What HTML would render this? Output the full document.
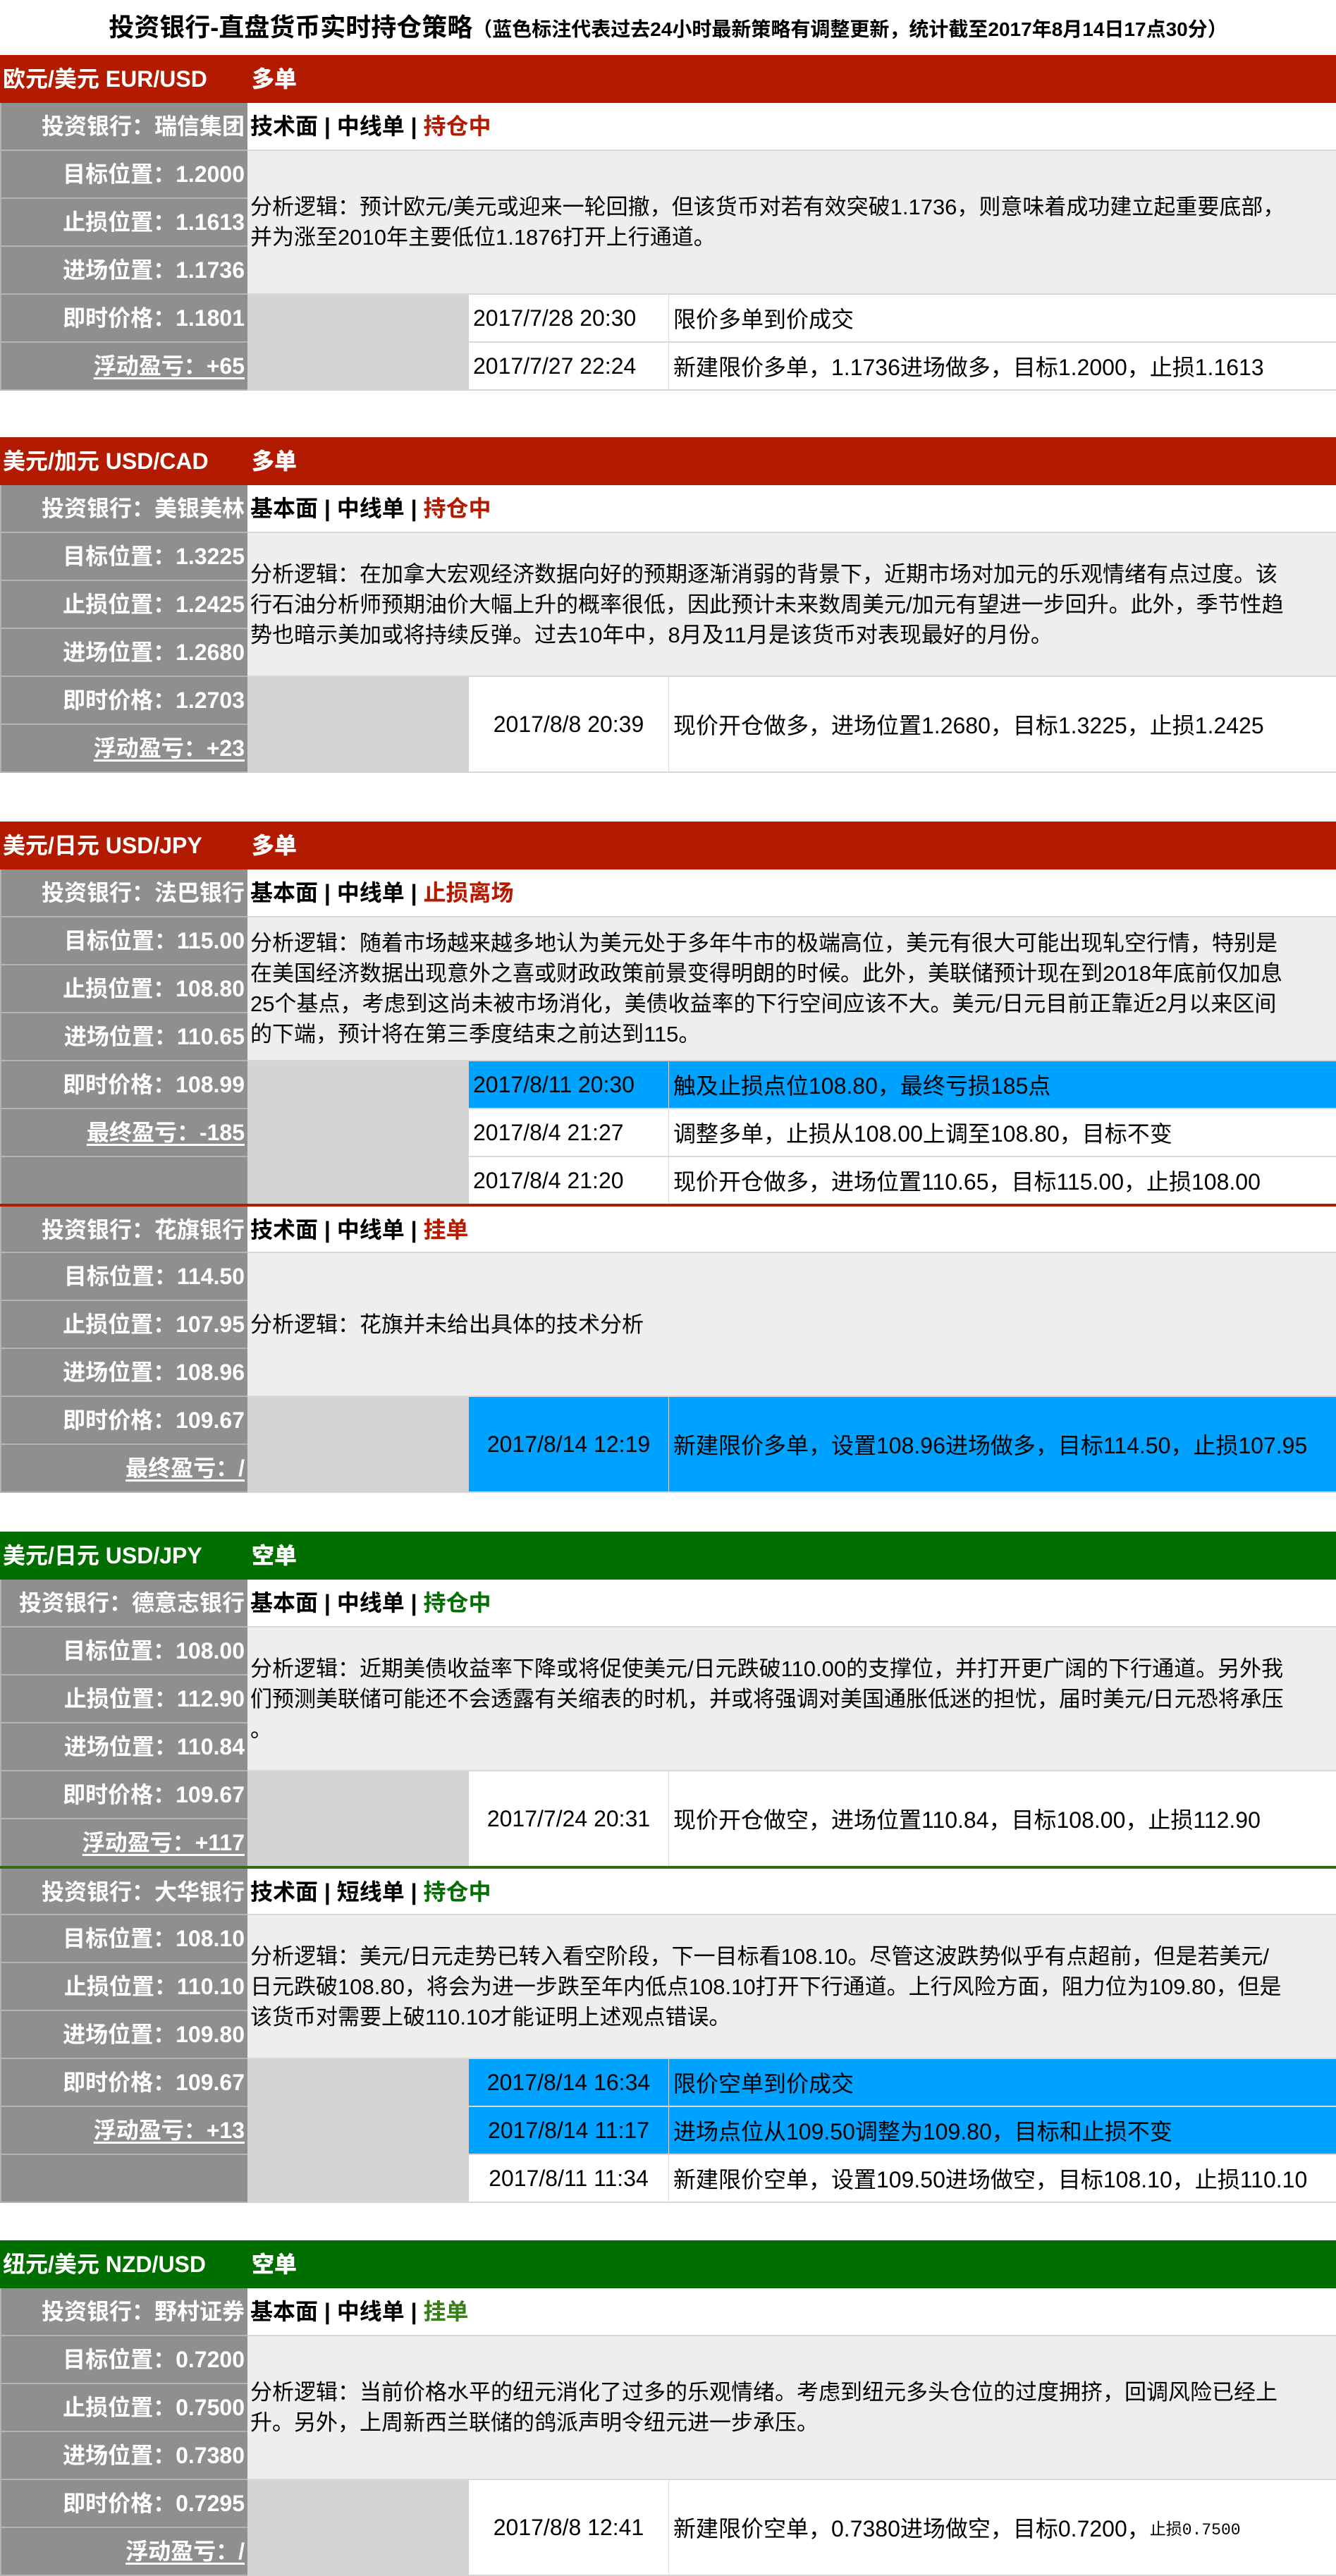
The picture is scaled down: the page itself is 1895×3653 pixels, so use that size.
<!DOCTYPE html>
<html><head><meta charset="utf-8">
<style>
*{box-sizing:border-box;margin:0;padding:0}
body{width:1895px;height:3653px;position:relative;overflow:hidden;background:#fff;font-family:"Liberation Sans","Noto Sans CJK SC",sans-serif;font-size:32px;color:#000}
div{position:absolute;white-space:nowrap}
.title{left:0;top:0;width:1895px;height:78px;line-height:78px;text-align:center;font-weight:bold;font-size:36px}
.title span{font-size:28px}
.hdr{left:0;width:1895px;height:68px;line-height:68px;color:#fff;font-weight:bold;font-size:32px;padding-left:4px}
.hdr b{position:absolute;left:357px;top:0}
.red{background:#b31b00}.grn{background:#006f00}
.lab{left:0;width:351px;height:68px;line-height:66px;background:#8f8f8f;color:#fff;font-weight:bold;text-align:right;padding-right:4px;border-bottom:2px solid #b4b4b4;border-left:2px solid #b4b4b4}
.lab u{text-decoration:underline;text-underline-offset:5px}
.bank{left:351px;width:1544px;height:68px;line-height:66px;background:#fff;border-bottom:2px solid #d8d8d8;padding-left:4px;font-weight:bold}
.rd{color:#b51a00}.gr{color:#007000}.gr2{color:#3a7d1a}
.ana{left:351px;width:1544px;background:#eeeeee;border-bottom:2px solid #d8d8d8;padding-left:4px;line-height:43px;font-size:31px;display:flex;flex-direction:column;justify-content:center;white-space:nowrap}
.ana p{white-space:nowrap}
.gap{left:351px;width:314px;background:#d4d4d4}
.dt{left:665px;width:284px;background:#fff;border-bottom:2px solid #d8d8d8;border-right:1px solid #dcdcdc;padding-left:6px;display:flex;align-items:center}
.dt.c{justify-content:center;padding-left:0}
.tx{left:949px;width:946px;background:#fff;border-bottom:2px solid #d8d8d8;padding-left:6px;display:flex;align-items:center}
.bl{background:#00a2ff}
.line{left:0;width:1895px;height:4px}
</style></head><body>
<div class="title">投资银行-直盘货币实时持仓策略<span>（蓝色标注代表过去24小时最新策略有调整更新，统计截至2017年8月14日17点30分）</span></div>

<!-- S1 -->
<div class="hdr red" style="top:78px">欧元/美元 EUR/USD<b>多单</b></div>
<div class="lab" style="top:146px">投资银行：瑞信集团</div>
<div class="bank" style="top:146px">技术面 | 中线单 | <span class="rd">持仓中</span></div>
<div class="lab" style="top:214px">目标位置：1.2000</div>
<div class="lab" style="top:282px">止损位置：1.1613</div>
<div class="lab" style="top:350px">进场位置：1.1736</div>
<div class="lab" style="top:418px">即时价格：1.1801</div>
<div class="lab" style="top:486px"><u>浮动盈亏：+65</u></div>
<div class="ana" style="top:214px;height:204px"><p>分析逻辑：预计欧元/美元或迎来一轮回撤，但该货币对若有效突破1.1736，则意味着成功建立起重要底部，</p><p>并为涨至2010年主要低位1.1876打开上行通道。</p></div>
<div class="gap" style="top:418px;height:136px"></div>
<div class="dt" style="top:418px;height:68px">2017/7/28 20:30</div>
<div class="tx" style="top:418px;height:68px">限价多单到价成交</div>
<div class="dt" style="top:486px;height:68px">2017/7/27 22:24</div>
<div class="tx" style="top:486px;height:68px">新建限价多单，1.1736进场做多，目标1.2000，止损1.1613</div>

<!-- S2 -->
<div class="hdr red" style="top:620px">美元/加元 USD/CAD<b>多单</b></div>
<div class="lab" style="top:688px">投资银行：美银美林</div>
<div class="bank" style="top:688px">基本面 | 中线单 | <span class="rd">持仓中</span></div>
<div class="lab" style="top:756px">目标位置：1.3225</div>
<div class="lab" style="top:824px">止损位置：1.2425</div>
<div class="lab" style="top:892px">进场位置：1.2680</div>
<div class="lab" style="top:960px">即时价格：1.2703</div>
<div class="lab" style="top:1028px"><u>浮动盈亏：+23</u></div>
<div class="ana" style="top:756px;height:204px"><p>分析逻辑：在加拿大宏观经济数据向好的预期逐渐消弱的背景下，近期市场对加元的乐观情绪有点过度。该</p><p>行石油分析师预期油价大幅上升的概率很低，因此预计未来数周美元/加元有望进一步回升。此外，季节性趋</p><p>势也暗示美加或将持续反弹。过去10年中，8月及11月是该货币对表现最好的月份。</p></div>
<div class="gap" style="top:960px;height:136px"></div>
<div class="dt c" style="top:960px;height:136px">2017/8/8 20:39</div>
<div class="tx" style="top:960px;height:136px">现价开仓做多，进场位置1.2680，目标1.3225，止损1.2425</div>

<!-- S3 -->
<div class="hdr red" style="top:1165px">美元/日元 USD/JPY<b>多单</b></div>
<div class="lab" style="top:1233px">投资银行：法巴银行</div>
<div class="bank" style="top:1233px">基本面 | 中线单 | <span class="rd">止损离场</span></div>
<div class="lab" style="top:1301px">目标位置：115.00</div>
<div class="lab" style="top:1369px">止损位置：108.80</div>
<div class="lab" style="top:1437px">进场位置：110.65</div>
<div class="lab" style="top:1505px">即时价格：108.99</div>
<div class="lab" style="top:1573px"><u>最终盈亏：-185</u></div>
<div class="lab" style="top:1641px"></div>
<div class="ana" style="top:1301px;height:204px"><p>分析逻辑：随着市场越来越多地认为美元处于多年牛市的极端高位，美元有很大可能出现轧空行情，特别是</p><p>在美国经济数据出现意外之喜或财政政策前景变得明朗的时候。此外，美联储预计现在到2018年底前仅加息</p><p>25个基点，考虑到这尚未被市场消化，美债收益率的下行空间应该不大。美元/日元目前正靠近2月以来区间</p><p>的下端，预计将在第三季度结束之前达到115。</p></div>
<div class="gap" style="top:1505px;height:204px"></div>
<div class="dt bl" style="top:1505px;height:68px">2017/8/11 20:30</div>
<div class="tx bl" style="top:1505px;height:68px">触及止损点位108.80，最终亏损185点</div>
<div class="dt" style="top:1573px;height:68px">2017/8/4 21:27</div>
<div class="tx" style="top:1573px;height:68px">调整多单，止损从108.00上调至108.80，目标不变</div>
<div class="dt" style="top:1641px;height:68px">2017/8/4 21:20</div>
<div class="tx" style="top:1641px;height:68px">现价开仓做多，进场位置110.65，目标115.00，止损108.00</div>
<div class="line" style="top:1707px;background:#b31b00"></div>
<div class="lab" style="top:1711px;height:66px">投资银行：花旗银行</div>
<div class="bank" style="top:1711px;height:66px">技术面 | 中线单 | <span class="rd">挂单</span></div>
<div class="lab" style="top:1777px">目标位置：114.50</div>
<div class="lab" style="top:1845px">止损位置：107.95</div>
<div class="lab" style="top:1913px">进场位置：108.96</div>
<div class="lab" style="top:1981px">即时价格：109.67</div>
<div class="lab" style="top:2049px"><u>最终盈亏：/</u></div>
<div class="ana" style="top:1777px;height:204px"><p>分析逻辑：花旗并未给出具体的技术分析</p></div>
<div class="gap" style="top:1981px;height:136px"></div>
<div class="dt c bl" style="top:1981px;height:136px">2017/8/14 12:19</div>
<div class="tx bl" style="top:1981px;height:136px">新建限价多单，设置108.96进场做多，目标114.50，止损107.95</div>

<!-- S4 -->
<div class="hdr grn" style="top:2172px">美元/日元 USD/JPY<b>空单</b></div>
<div class="lab" style="top:2240px">投资银行：德意志银行</div>
<div class="bank" style="top:2240px">基本面 | 中线单 | <span class="gr">持仓中</span></div>
<div class="lab" style="top:2308px">目标位置：108.00</div>
<div class="lab" style="top:2376px">止损位置：112.90</div>
<div class="lab" style="top:2444px">进场位置：110.84</div>
<div class="lab" style="top:2512px">即时价格：109.67</div>
<div class="lab" style="top:2580px"><u>浮动盈亏：+117</u></div>
<div class="ana" style="top:2308px;height:204px"><p>分析逻辑：近期美债收益率下降或将促使美元/日元跌破110.00的支撑位，并打开更广阔的下行通道。另外我</p><p>们预测美联储可能还不会透露有关缩表的时机，并或将强调对美国通胀低迷的担忧，届时美元/日元恐将承压</p><p>。</p></div>
<div class="gap" style="top:2512px;height:136px"></div>
<div class="dt c" style="top:2512px;height:136px">2017/7/24 20:31</div>
<div class="tx" style="top:2512px;height:136px">现价开仓做空，进场位置110.84，目标108.00，止损112.90</div>
<div class="line" style="top:2646px;background:#2f6e1a"></div>
<div class="lab" style="top:2650px;height:66px">投资银行：大华银行</div>
<div class="bank" style="top:2650px;height:66px">技术面 | 短线单 | <span class="gr">持仓中</span></div>
<div class="lab" style="top:2716px">目标位置：108.10</div>
<div class="lab" style="top:2784px">止损位置：110.10</div>
<div class="lab" style="top:2852px">进场位置：109.80</div>
<div class="lab" style="top:2920px">即时价格：109.67</div>
<div class="lab" style="top:2988px"><u>浮动盈亏：+13</u></div>
<div class="lab" style="top:3056px"></div>
<div class="ana" style="top:2716px;height:204px"><p>分析逻辑：美元/日元走势已转入看空阶段，下一目标看108.10。尽管这波跌势似乎有点超前，但是若美元/</p><p>日元跌破108.80，将会为进一步跌至年内低点108.10打开下行通道。上行风险方面，阻力位为109.80，但是</p><p>该货币对需要上破110.10才能证明上述观点错误。</p></div>
<div class="gap" style="top:2920px;height:204px"></div>
<div class="dt c bl" style="top:2920px;height:68px">2017/8/14 16:34</div>
<div class="tx bl" style="top:2920px;height:68px">限价空单到价成交</div>
<div class="dt c bl" style="top:2988px;height:68px">2017/8/14 11:17</div>
<div class="tx bl" style="top:2988px;height:68px">进场点位从109.50调整为109.80，目标和止损不变</div>
<div class="dt c" style="top:3056px;height:68px">2017/8/11 11:34</div>
<div class="tx" style="top:3056px;height:68px">新建限价空单，设置109.50进场做空，目标108.10，止损110.10</div>

<!-- S5 -->
<div class="hdr grn" style="top:3177px">纽元/美元 NZD/USD<b>空单</b></div>
<div class="lab" style="top:3245px">投资银行：野村证券</div>
<div class="bank" style="top:3245px">基本面 | 中线单 | <span class="gr2">挂单</span></div>
<div class="lab" style="top:3313px">目标位置：0.7200</div>
<div class="lab" style="top:3381px">止损位置：0.7500</div>
<div class="lab" style="top:3449px">进场位置：0.7380</div>
<div class="lab" style="top:3517px">即时价格：0.7295</div>
<div class="lab" style="top:3585px"><u>浮动盈亏：/</u></div>
<div class="ana" style="top:3313px;height:204px"><p>分析逻辑：当前价格水平的纽元消化了过多的乐观情绪。考虑到纽元多头仓位的过度拥挤，回调风险已经上</p><p>升。另外，上周新西兰联储的鸽派声明令纽元进一步承压。</p></div>
<div class="gap" style="top:3517px;height:136px"></div>
<div class="dt c" style="top:3517px;height:136px">2017/8/8 12:41</div>
<div class="tx" style="top:3517px;height:136px">新建限价空单，0.7380进场做空，目标0.7200，<span style="font-size:23px;font-family:'Liberation Mono','Noto Sans CJK SC',monospace">止损0.7500</span></div>
</body></html>
